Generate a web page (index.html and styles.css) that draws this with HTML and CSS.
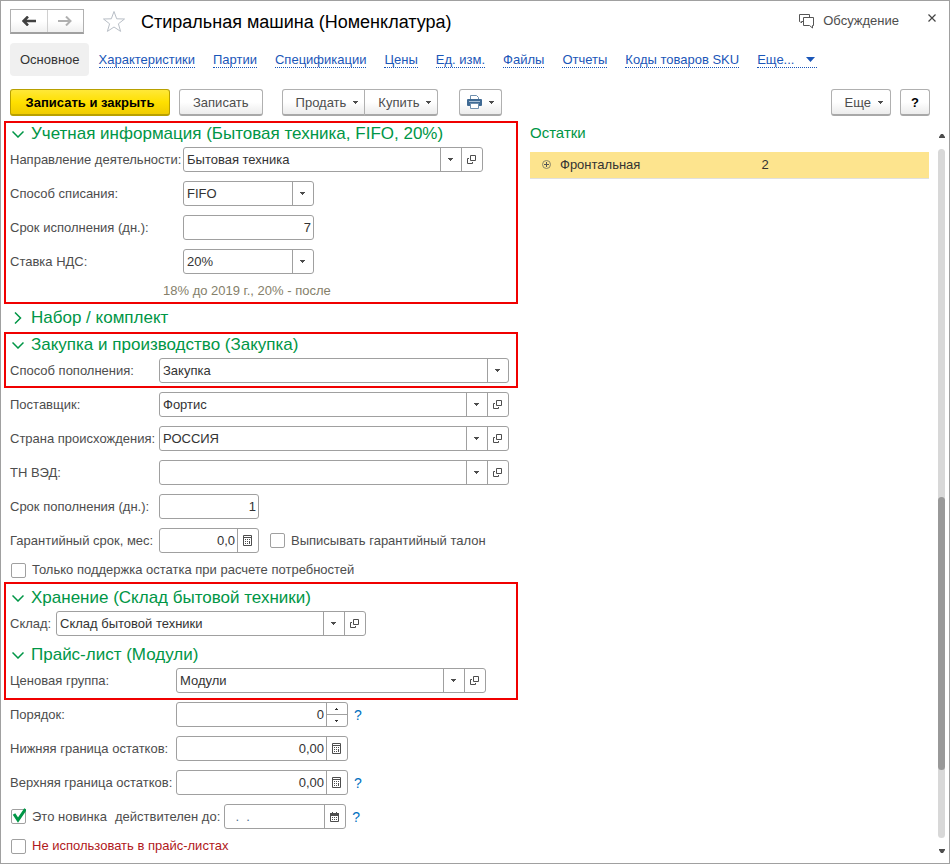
FILE: index.html
```
<!DOCTYPE html>
<html lang="ru">
<head>
    <meta charset="utf-8">
    <title>Стиральная машина (Номенклатура)</title>
    <link rel="stylesheet" href="styles.css">
</head>
<body>
    <!-- shared icons -->
    <svg width="0" height="0" class="sprite">
        <symbol id="caret" viewBox="0 0 5 3"><path d="M0 0h5v1h-1v1h-1v1h-1v-1h-1v-1h-1z"/></symbol>
        <symbol id="open" viewBox="0 0 9 9"><path d="M3.500.5h5v5h-5zM2 3.500H.5v5h5V7" fill="none" stroke="currentColor"/></symbol>
        <symbol id="calc" viewBox="0 0 9 11"><path d="M.5.5h8v10h-8zM0 2.500h9" fill="none" stroke="currentColor"/><path d="M2 4h1v1h-1zM4 4h1v1h-1zM6 4h1v1h-1zM2 6h1v1h-1zM4 6h1v1h-1zM6 6h1v3h-1zM2 8h1v1h-1zM4 8h1v1h-1z"/></symbol>
        <symbol id="date" viewBox="0 0 9 10"><path d="M.5 1.500h8v8h-8z" fill="none" stroke="currentColor"/><path d="M0 1h9v3h-9zM2 0h1v2h-1zM6 0h1v2h-1zM2 5h1v1h-1zM4 5h1v1h-1zM6 5h1v1h-1zM2 7h1v1h-1zM4 7h1v1h-1zM6 7h1v1h-1z"/></symbol>
        <symbol id="down" viewBox="0 0 12 7"><path d="M.5.5L6 6L11.500.5" fill="none" stroke="currentColor" stroke-width="1.500"/></symbol>
        <symbol id="right" viewBox="0 0 7 12"><path d="M.5.5L6 6L.5 11.500" fill="none" stroke="currentColor" stroke-width="1.500"/></symbol>
    </svg>

    <div class="window">
        <header class="header">
            <div class="history">
                <button type="button" aria-label="Назад"><svg width="14" height="10" viewBox="0 0 14 10"><path d="M14 5H2M6 .5L1.500 5L6 9.500" fill="none" stroke="#404040" stroke-width="2.500"/></svg></button>
                <button type="button" aria-label="Вперед"><svg width="14" height="10" viewBox="0 0 14 10"><path d="M0 5h12M8 .5L12.500 5L8 9.500" fill="none" stroke="#b0b0b0" stroke-width="2"/></svg></button>
            </div>
            <svg class="star" width="24" height="23" viewBox="0 0 24 23"><path d="M12 1.500l2.700 7.300 7.800.2-6.100 4.800 2.200 7.600L12 17l-6.600 4.400 2.200-7.600L1.500 9l7.800-.2z" fill="none" stroke="#b8bec6"/></svg>
            <h1>Стиральная машина (Номенклатура)</h1>
            <button type="button" class="talk">
                <svg width="16" height="16" viewBox="0 0 16 16"><path d="M4 8.500H2.500V10L1 8.500H.5v-7h10V4M4.500 4.500h10v8h-1v2.500l-3-2.500h-6z" fill="none" stroke="#555"/></svg>
                Обсуждение
            </button>
            <button type="button" class="close" aria-label="Закрыть"><svg width="8" height="8" viewBox="0 0 8 8"><path d="M.5.5l7 7M7.500.5l-7 7" stroke="#444" stroke-width="1.200"/></svg></button>
        </header>

        <nav class="tabs">
            <span class="current">Основное</span>
            <a href="#">Характеристики</a>
            <a href="#">Партии</a>
            <a href="#">Спецификации</a>
            <a href="#">Цены</a>
            <a href="#">Ед. изм.</a>
            <a href="#">Файлы</a>
            <a href="#">Отчеты</a>
            <a href="#">Коды товаров SKU</a>
            <a href="#">Еще... <svg width="9" height="5" viewBox="0 0 9 5"><path d="M0 0h9L4.500 5z"/></svg></a>
        </nav>

        <div class="toolbar">
            <button type="button" class="btn primary">Записать и закрыть</button>
            <button type="button" class="btn">Записать</button>
            <div class="pair">
                <button type="button" class="btn">Продать <svg class="caret"><use href="#caret"/></svg></button>
                <button type="button" class="btn">Купить <svg class="caret"><use href="#caret"/></svg></button>
            </div>
            <button type="button" class="btn print" aria-label="Печать">
                <svg width="15" height="14" viewBox="0 0 15 14"><path d="M3.500 5V.5h6l2 2V5" fill="#fff" stroke="#6f8fae"/><path d="M1 4h13q1 0 1 1v5q0 1-1 1H1q-1 0-1-1V5q0-1 1-1z" fill="#3f6a94"/><path d="M2 6h11v1H2z" fill="#a9c1d8"/><path d="M3.500 8.500h8v5h-8z" fill="#fff" stroke="#6f8fae"/></svg>
                <svg class="caret"><use href="#caret"/></svg>
            </button>
            <button type="button" class="btn more">Еще <svg class="caret"><use href="#caret"/></svg></button>
            <button type="button" class="btn help">?</button>
        </div>

        <main class="main">
            <form class="form">
                <section class="group marked account">
                    <h2><svg width="12" height="7"><use href="#down"/></svg>Учетная информация (Бытовая техника, FIFO, 20%)</h2>
                    <div class="row">
                        <label for="direction">Направление деятельности:</label>
                        <div class="field w300">
                            <span class="pick"><select id="direction"><option>Бытовая техника</option></select><svg class="drop"><use href="#caret"/></svg></span>
                            <button type="button" aria-label="Открыть"><svg width="9" height="9"><use href="#open"/></svg></button>
                        </div>
                    </div>
                    <div class="row">
                        <label for="writeoff">Способ списания:</label>
                        <div class="field w131">
                            <span class="pick"><select id="writeoff"><option>FIFO</option></select><svg class="drop"><use href="#caret"/></svg></span>
                        </div>
                    </div>
                    <div class="row">
                        <label for="term">Срок исполнения (дн.):</label>
                        <div class="field w131"><input type="text" class="num" id="term" value="7"></div>
                    </div>
                    <div class="row">
                        <label for="vat">Ставка НДС:</label>
                        <div class="field w131">
                            <span class="pick"><select id="vat"><option>20%</option></select><svg class="drop"><use href="#caret"/></svg></span>
                        </div>
                    </div>
                    <p class="hint">18% до 2019 г., 20% - после</p>
                </section>

                <section class="group">
                    <h2><svg width="12" height="12"><use href="#right"/></svg>Набор / комплект</h2>
                </section>

                <section class="group marked supply">
                    <h2><svg width="12" height="7"><use href="#down"/></svg>Закупка и производство (Закупка)</h2>
                    <div class="row">
                        <label for="method">Способ пополнения:</label>
                        <div class="field w350">
                            <span class="pick"><select id="method"><option>Закупка</option></select><svg class="drop"><use href="#caret"/></svg></span>
                        </div>
                    </div>
                </section>

                <section class="group supply">
                    <div class="row">
                        <label for="supplier">Поставщик:</label>
                        <div class="field w350">
                            <span class="pick"><select id="supplier"><option>Фортис</option></select><svg class="drop"><use href="#caret"/></svg></span>
                            <button type="button" aria-label="Открыть"><svg width="9" height="9"><use href="#open"/></svg></button>
                        </div>
                    </div>
                    <div class="row">
                        <label for="country">Страна происхождения:</label>
                        <div class="field w350">
                            <span class="pick"><select id="country"><option>РОССИЯ</option></select><svg class="drop"><use href="#caret"/></svg></span>
                            <button type="button" aria-label="Открыть"><svg width="9" height="9"><use href="#open"/></svg></button>
                        </div>
                    </div>
                    <div class="row">
                        <label for="tnved">ТН ВЭД:</label>
                        <div class="field w350">
                            <span class="pick"><select id="tnved"><option></option></select><svg class="drop"><use href="#caret"/></svg></span>
                            <button type="button" aria-label="Открыть"><svg width="9" height="9"><use href="#open"/></svg></button>
                        </div>
                    </div>
                    <div class="row">
                        <label for="refill">Срок пополнения (дн.):</label>
                        <div class="field w100"><input type="text" class="num" id="refill" value="1"></div>
                    </div>
                    <div class="row">
                        <label for="warranty">Гарантийный срок, мес:</label>
                        <div class="field w100">
                            <input type="text" class="num" id="warranty" value="0,0">
                            <button type="button" aria-label="Калькулятор"><svg width="9" height="11"><use href="#calc"/></svg></button>
                        </div>
                        <label class="check next"><input type="checkbox">Выписывать гарантийный талон</label>
                    </div>
                    <label class="check"><input type="checkbox">Только поддержка остатка при расчете потребностей</label>
                </section>

                <section class="group marked storage">
                    <h2><svg width="12" height="7"><use href="#down"/></svg>Хранение (Склад бытовой техники)</h2>
                    <div class="row stock">
                        <label for="stock">Склад:</label>
                        <div class="field w310">
                            <span class="pick"><select id="stock"><option>Склад бытовой техники</option></select><svg class="drop"><use href="#caret"/></svg></span>
                            <button type="button" aria-label="Открыть"><svg width="9" height="9"><use href="#open"/></svg></button>
                        </div>
                    </div>
                    <h2><svg width="12" height="7"><use href="#down"/></svg>Прайс-лист (Модули)</h2>
                    <div class="row price">
                        <label for="pricegroup">Ценовая группа:</label>
                        <div class="field w310">
                            <span class="pick"><select id="pricegroup"><option>Модули</option></select><svg class="drop"><use href="#caret"/></svg></span>
                            <button type="button" aria-label="Открыть"><svg width="9" height="9"><use href="#open"/></svg></button>
                        </div>
                    </div>
                </section>

                <section class="group">
                    <div class="row price">
                        <label for="order">Порядок:</label>
                        <div class="field w172">
                            <input type="text" class="num" id="order" value="0">
                            <div class="spin">
                                <button type="button" aria-label="Больше"><svg width="3" height="2" viewBox="0 0 3 2"><path d="M1 0h1v1h1v1h-3v-1h1z"/></svg></button>
                                <button type="button" aria-label="Меньше"><svg width="3" height="2" viewBox="0 0 3 2"><path d="M0 0h3v1h-1v1h-1v-1h-1z"/></svg></button>
                            </div>
                        </div>
                        <a href="#" class="tip">?</a>
                    </div>
                    <div class="row price">
                        <label for="low">Нижняя граница остатков:</label>
                        <div class="field w172">
                            <input type="text" class="num" id="low" value="0,00">
                            <button type="button" aria-label="Калькулятор"><svg width="9" height="11"><use href="#calc"/></svg></button>
                        </div>
                    </div>
                    <div class="row price">
                        <label for="high">Верхняя граница остатков:</label>
                        <div class="field w172">
                            <input type="text" class="num" id="high" value="0,00">
                            <button type="button" aria-label="Калькулятор"><svg width="9" height="11"><use href="#calc"/></svg></button>
                        </div>
                        <a href="#" class="tip">?</a>
                    </div>
                    <div class="row novelty">
                        <label class="check"><input type="checkbox" checked><svg class="tick" width="15" height="15" viewBox="0 0 15 15"><path d="M3 6l4 6 7.500-11" fill="none" stroke="#009646" stroke-width="3"/></svg>Это новинка</label>
                        <label for="until">действителен до:</label>
                        <div class="field w122">
                            <input type="text" class="dots" id="until" value="  .  .">
                            <button type="button" aria-label="Календарь"><svg width="9" height="10"><use href="#date"/></svg></button>
                        </div>
                        <a href="#" class="tip">?</a>
                    </div>
                    <label class="check warn"><input type="checkbox">Не использовать в прайс-листах</label>
                </section>
            </form>

            <aside class="rest">
                <h3>Остатки</h3>
                <table>
                    <tr>
                        <td class="name"><svg width="9" height="9" viewBox="0 0 9 9"><circle cx="4.500" cy="4.500" r="4" fill="none" stroke="#8a8468"/><path d="M2 4.500h5M4.500 2v5" stroke="#555"/></svg>Фронтальная</td>
                        <td>2</td>
                    </tr>
                </table>
            </aside>

            <div class="scroll">
                <svg width="6" height="4" viewBox="0 0 6 4"><path d="M2 0h2l2 3v1H0V3z"/></svg>
                <div class="track"><div class="thumb"></div></div>
                <svg width="6" height="4" viewBox="0 0 6 4"><path d="M0 0h6v1L4 4H2L0 1z"/></svg>
            </div>
        </main>
    </div>
</body>
</html>
```
FILE: styles.css
```
* {
    box-sizing: border-box;
}

body {
    margin: 0;
    font-family: "Liberation Sans", Arial, sans-serif;
    font-size: 13px;
    line-height: 16px;
    color: #4d4d4d;
    background-color: #fff;
}

h1, h2, h3, p {
    margin: 0;
    font-weight: normal;
}

button, input, select {
    font: inherit;
    color: inherit;
    margin: 0;
    padding: 0;
    border: none;
    background: none;
}

svg {
    fill: currentColor;
    flex: none;
}

.sprite {
    position: absolute;
}

.window {
    display: flex;
    flex-direction: column;
    min-height: 100vh;
    border: 1px solid #a0a0a0;
}

/* title */
.header {
    display: flex;
    align-items: center;
    padding: 7px 7px 0 9px;
    height: 33px;
}

.history {
    display: flex;
    width: 74px;
    height: 25px;
    border: 1px solid #b0b0b0;
    border-bottom: 2px solid #a0a0a0;
    background: linear-gradient(#fff 50%, #f0f0f0);
}

.history button {
    flex: 1;
    display: flex;
    align-items: center;
    justify-content: center;
}

.history button + button {
    border-left: 1px solid #d0d0d0;
}

.star {
    margin: 0 15px 0 18px;
}

h1 {
    padding-top: 2px;
    font-size: 18px;
    line-height: 24px;
    color: #000;
}

.talk {
    display: flex;
    align-items: center;
    gap: 8px;
    margin-left: auto;
}

.close {
    align-self: flex-start;
    display: flex;
    padding: 6px;
    margin-left: 23px;
}

/* sections of the card */
.tabs {
    display: flex;
    align-items: center;
    gap: 18px;
    margin-top: 9px;
    padding-left: 9px;
    height: 33px;
}

.tabs .current {
    padding: 9px 9px 8px 10px;
    margin-right: -8px;
    border-radius: 4px;
    background-color: #f0f0f0;
    color: #333;
}

.tabs a {
    padding-top: 2px;
    line-height: 14px;
    color: #1a56b8;
    text-decoration: none;
    border-bottom: 1px dotted #1a56b8;
}

.tabs a svg {
    margin: 0 2px 2px 8px;
}

/* commands */
.toolbar {
    display: flex;
    gap: 9px;
    margin-top: 13px;
    padding: 0 19px 0 9px;
}

.btn {
    display: flex;
    align-items: center;
    justify-content: center;
    height: 27px;
    padding: 1px 13px 0;
    border: 1px solid #b0b0b0;
    border-bottom: 2px solid #a8a8a8;
    border-radius: 3px;
    background: linear-gradient(#fff 50%, #ececec);
}

.primary {
    width: 160px;
    padding: 1px 0 0;
    border-color: #b8a000;
    background: linear-gradient(#ffe838, #ffe000 50%, #f0cc00);
    color: #000;
    font-weight: bold;
}

.caret {
    width: 5px;
    height: 3px;
    margin-left: 7px;
}

.pair {
    display: flex;
    margin: 0 12px 0 10px;
}

.pair .btn {
    padding: 1px 6px 0 13px;
}

.pair .btn:first-child {
    border-radius: 3px 0 0 3px;
}

.pair .btn:last-child {
    margin-left: -1px;
    border-radius: 0 3px 3px 0;
}

.print {
    padding: 0 7px;
}

.more {
    margin-left: auto;
    padding: 1px 7px 0 13px;
}

.help {
    width: 30px;
    padding: 1px 0 0;
    color: #000;
    font-weight: bold;
}

/* form on the left, stock on the right */
.main {
    flex: 1;
    display: grid;
    grid-template-columns: minmax(514px, 9fr) minmax(0, 7fr) 7px;
    gap: 0 12px;
    padding: 5px 4px 7px 3px;
}

.form {
    display: flex;
    flex-direction: column;
    gap: 4px;
}

.group {
    display: flex;
    flex-direction: column;
    gap: 9px;
    padding: 0 6px;
}

.marked {
    padding: 0 4px 3px;
    border: 2px solid #f00000;
}

h2 {
    display: flex;
    align-items: center;
    gap: 7px;
    margin-bottom: -7px;
    padding-left: 2px;
    font-size: 17px;
    line-height: 22px;
    color: #009646;
}

.group:not(.marked) h2 {
    margin-bottom: 0;
    line-height: 20px;
}

.row {
    display: flex;
    align-items: center;
}

.account label {
    width: 173px;
}

.supply .row > label:first-child {
    width: 149px;
}

.stock label {
    width: 46px;
}

.price label {
    width: 166px;
}

.storage {
    margin-bottom: -2px;
    padding: 3px 4px 5px;
}

.row + h2 {
    margin-top: -1px;
}

.hint {
    padding-left: 153px;
    color: #85806a;
}

/* fields */
.field {
    display: flex;
    height: 25px;
    border: 1px solid #a0a0a0;
    border-radius: 3px;
    background-color: #fff;
    color: #333;
}

.w100 { width: 100px; }
.w122 { width: 122px; }
.w131 { width: 131px; }
.w172 { width: 172px; }
.w300 { width: 300px; }
.w310 { width: 310px; }
.w350 { width: 350px; }

.pick {
    flex: 1;
    display: grid;
    grid-template-columns: 1fr 21px;
}

.pick select {
    grid-area: 1 / 1 / 2 / 3;
    appearance: none;
    padding-left: 3px;
}

.drop {
    grid-area: 1 / 2;
    width: 21px;
    height: 23px;
    padding: 10px 8px 10px 7px;
    border-left: 1px solid #a0a0a0;
    color: #4d4d4d;
    pointer-events: none;
}

.field > input {
    flex: 1;
    min-width: 0;
    padding: 0 2px 0 3px;
}

.num {
    text-align: right;
}

.dots {
    color: #4a7090;
}

.field > button {
    display: flex;
    align-items: center;
    justify-content: center;
    width: 21px;
    padding-right: 1px;
    border-left: 1px solid #a0a0a0;
    color: #4d4d4d;
}

.spin {
    display: flex;
    flex-direction: column;
    width: 21px;
    border-left: 1px solid #a0a0a0;
}

.spin button {
    flex: 1;
    display: flex;
    align-items: center;
    justify-content: center;
    padding-right: 1px;
}

.spin button + button {
    border-top: 1px solid #a0a0a0;
}

.tip {
    margin-left: 6px;
    font-size: 14px;
    color: #0070c0;
    text-decoration: none;
}

.check {
    display: flex;
    align-items: center;
}

.check input {
    appearance: none;
    width: 15px;
    height: 15px;
    margin: 0 6px 0 1px;
    border: 1px solid #a0a0a0;
    border-radius: 2px;
}

.next {
    margin-left: 10px;
}

/* tick lies over its box */
.tick {
    margin: -2px 6px 0 -21px;
}

.novelty .check {
    margin-right: 8px;
}

.novelty .field {
    margin-left: 4px;
}

.warn {
    color: #b01820;
}

/* stock */
h3 {
    font-size: 15px;
    line-height: 20px;
    color: #009646;
}

.rest {
    margin-right: -3px;
    padding-top: 2px;
}

table {
    width: 100%;
    margin-top: 9px;
    border-collapse: collapse;
    border-bottom: 1px solid #e0e0e0;
}

td {
    height: 26px;
    padding: 1px 0 0;
    background-color: #fde48e;
    color: #333;
}

.name {
    width: 58%;
    padding-left: 12px;
}

.name svg {
    margin-right: 9px;
}

/* scroll bar */
.scroll {
    display: flex;
    flex-direction: column;
    align-items: center;
    padding: 13px 0 3px;
    gap: 11px;
}

.track {
    flex: 1;
    display: flex;
    flex-direction: column;
    width: 7px;
    border-radius: 4px;
    background-color: #d8d8d8;
}

.track::before {
    content: "";
    flex: 51;
}

.track::after {
    content: "";
    flex: 10;
}

.thumb {
    flex: 40;
    border-radius: 4px;
    background-color: #999;
}
```
